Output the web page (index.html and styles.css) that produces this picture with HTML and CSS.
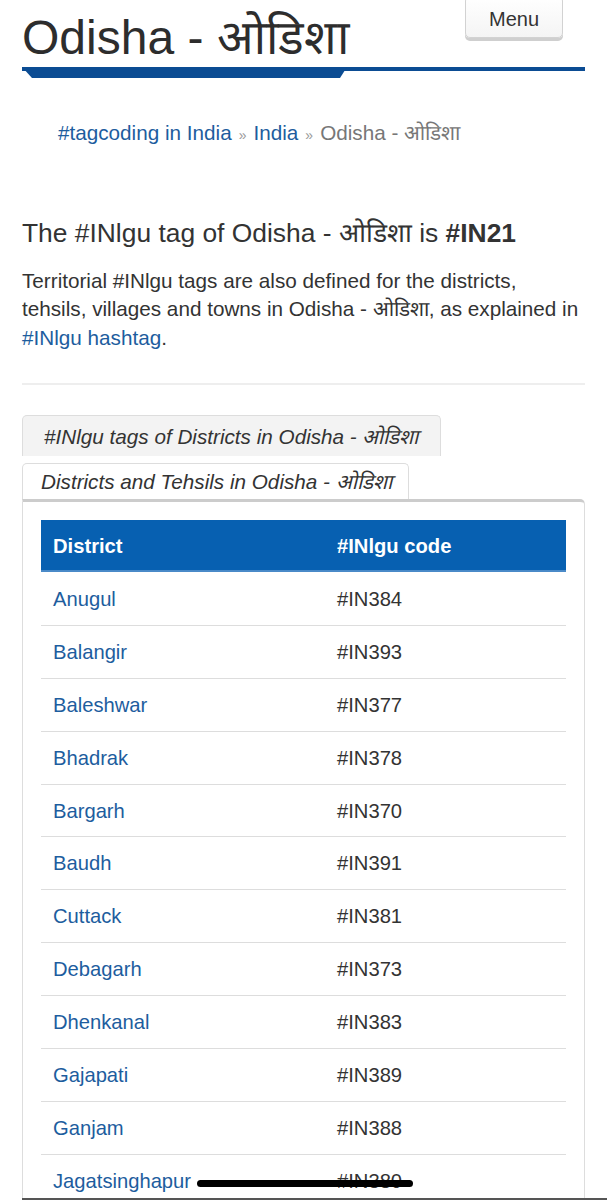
FILE: index.html
```html
<!DOCTYPE html>
<html lang="en">
<head>
<meta charset="utf-8">
<title>Odisha - ओडिशा</title>
<link rel="stylesheet" href="styles.css">
</head>
<body>
<div class="page">
  <header class="top">
    <h1 class="title">Odisha - ओडिशा</h1>
    <button class="menu">Menu</button>
  </header>
  <svg class="rule" width="563" height="11" viewBox="0 0 563 11" aria-hidden="true">
    <rect x="0" y="0" width="563" height="4" fill="#0b4c93"/>
    <polygon points="0,0 325,0 318,11 10,11" fill="#0b4c93"/>
  </svg>
  <nav class="crumbs"><a href="#">#tagcoding in India</a><span class="sep">»</span><a href="#">India</a><span class="sep">»</span><span class="current">Odisha - ओडिशा</span></nav>
  <h3 class="lead">The #INlgu tag of Odisha - ओडिशा is <b>#IN21</b></h3>
  <p class="intro">Territorial #INlgu tags are also defined for the districts, tehsils, villages and towns in Odisha - ओडिशा, as explained in <a href="#">#INlgu hashtag</a>.</p>
  <hr class="divider">
  <div class="tabs">
    <div class="tab tab-alt">#INlgu tags of Districts in Odisha - ओडिशा</div>
    <div class="tab tab-active">Districts and Tehsils in Odisha - ओडिशा</div>
  </div>
  <div class="panel">
    <table class="codes">
      <colgroup><col class="col-name"><col></colgroup>
      <thead>
        <tr><th>District</th><th>#INlgu code</th></tr>
      </thead>
      <tbody>
        <tr><td><a href="#">Anugul</a></td><td>#IN384</td></tr>
        <tr><td><a href="#">Balangir</a></td><td>#IN393</td></tr>
        <tr><td><a href="#">Baleshwar</a></td><td>#IN377</td></tr>
        <tr><td><a href="#">Bhadrak</a></td><td>#IN378</td></tr>
        <tr><td><a href="#">Bargarh</a></td><td>#IN370</td></tr>
        <tr><td><a href="#">Baudh</a></td><td>#IN391</td></tr>
        <tr><td><a href="#">Cuttack</a></td><td>#IN381</td></tr>
        <tr><td><a href="#">Debagarh</a></td><td>#IN373</td></tr>
        <tr><td><a href="#">Dhenkanal</a></td><td>#IN383</td></tr>
        <tr><td><a href="#">Gajapati</a></td><td>#IN389</td></tr>
        <tr><td><a href="#">Ganjam</a></td><td>#IN388</td></tr>
        <tr><td><a href="#">Jagatsinghapur</a></td><td>#IN380</td></tr>
      </tbody>
    </table>
  </div>
</div>
<div class="home-indicator"></div>
<div class="toolbar-edge"></div>
</body>
</html>
```
FILE: styles.css
```css
body {
  margin: 0;
  font-family: "Liberation Sans", Arial, sans-serif;
  color: #333;
  background: #fff;
}
a { color: #1d5d9e; text-decoration: none; }

.page { padding: 0 22px; }

.top {
  display: flex;
  justify-content: space-between;
  align-items: flex-start;
  height: 67px;
}
.title {
  margin: 0;
  padding-top: 14px;
  font-size: 48px;
  line-height: 48px;
  font-weight: normal;
  color: #2d2d2d;
  white-space: nowrap;
}
.menu {
  margin-top: -4px;
  margin-right: 22px;
  width: 98px;
  height: 42px;
  padding: 4px 0 0;
  font-family: inherit;
  font-size: 20px;
  color: #333;
  background: linear-gradient(#ffffff, #f4f4f4);
  border: 1px solid #d2d2d2;
  border-radius: 5px;
  box-shadow: 0 3px 0 #cfcfcf;
}

.rule { display: block; }

.crumbs {
  margin-top: 41px;
  padding-left: 36px;
  font-size: 20.7px;
  line-height: 28px;
}
.crumbs .sep { color: #999; font-size: 14px; padding: 0 7px; }
.crumbs .current { color: #777; }

.lead {
  margin: 70px 0 0;
  font-size: 26.4px;
  line-height: 28.6px;
  font-weight: normal;
  color: #333;
}
.intro {
  margin: 19px 0 0;
  font-size: 20.7px;
  line-height: 28.5px;
}
.divider {
  margin: 31px 0 0;
  border: 0;
  border-top: 2px solid #eee;
}

.tabs {
  margin-top: 30px;
  display: flex;
  flex-direction: column;
  align-items: flex-start;
  gap: 7px;
}
.tab {
  font-style: italic;
  font-size: 20.7px;
  line-height: 28px;
  border: 1px solid #ddd;
  border-bottom: 0;
  border-radius: 5px 5px 0 0;
  color: #333;
}
.tab-alt { background: #f3f3f3; padding: 7px 22px 5px 21px; }
.tab-active { background: #fff; padding: 4px 16px 3px 18px; }

.panel {
  border: 1px solid #ddd;
  border-top: 3px solid #ccc;
  border-radius: 0 5px 0 0;
  padding: 18px 18px 40px;
}
.codes {
  width: 100%;
  border-collapse: separate;
  border-spacing: 0;
  table-layout: fixed;
  font-size: 20.2px;
}
.col-name { width: 284px; }
.codes th {
  background: #0760b1;
  color: #fff;
  text-align: left;
  font-weight: bold;
  padding: 13px 12px 11px;
  line-height: 26px;
  border-bottom: 2px solid #4a8ac8;
}
.codes td {
  padding: 13px 12px 11px;
  line-height: 27.86px;
  border-top: 1px solid #ddd;
  color: #333;
}
.codes tbody tr:first-child td { border-top: 0; padding-top: 14px; }

.home-indicator {
  position: fixed;
  left: 197px;
  top: 1180px;
  width: 216px;
  height: 7px;
  border-radius: 4px;
  background: #000;
}
.toolbar-edge {
  position: fixed;
  left: 22px;
  right: 0;
  bottom: 0;
  height: 2px;
  background: #555;
}
```
